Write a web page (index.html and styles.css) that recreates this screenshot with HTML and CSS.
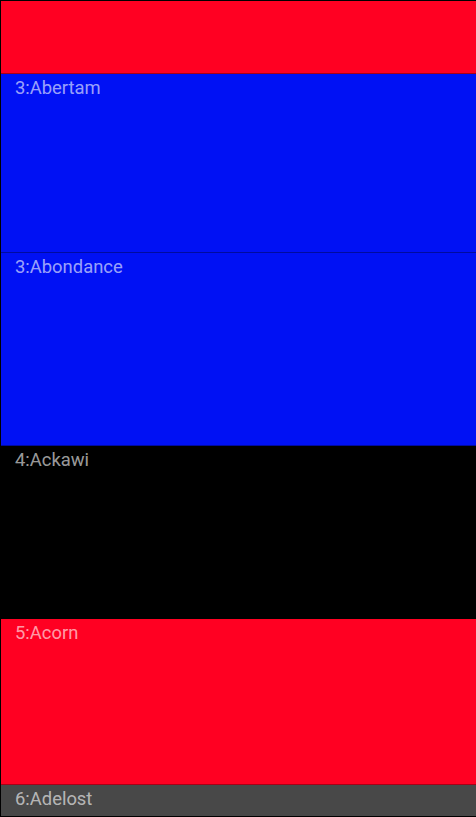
FILE: index.html
```html
<!DOCTYPE html>
<html>
<head>
<meta charset="utf-8">
<link rel="stylesheet" href="styles.css">
</head>
<body>
<div class="list">
  <div class="row red top"></div>
  <div class="row blue h1"><span class="label">3:Abertam</span></div>
  <div class="row blue h2"><span class="label">3:Abondance</span></div>
  <div class="row black h3"><span class="label">4:Ackawi</span></div>
  <div class="row red h4"><span class="label">5:Acorn</span></div>
  <div class="row gray h5"><span class="label">6:Adelost</span></div>
</div>
</body>
</html>
```
FILE: styles.css
```css
html, body {
  margin: 0;
  padding: 0;
  background: #000;
}
.list {
  width: 475px;
  height: 815px;
  border-top: 1px solid #000;
  border-left: 1px solid #000;
  border-bottom: 1px solid #000;
  display: flex;
  flex-direction: column;
  overflow: hidden;
  background: #484848;
}
.row {
  box-sizing: border-box;
  border-bottom: 1px solid rgba(0,0,0,0.35);
  padding: 2px 14px 0;
  font-family: Roboto, "Liberation Sans", sans-serif;
  font-size: 18.4px;
  line-height: 24px;
  color: rgba(255,255,255,0.62);
  flex: none;
}
.label { display: block; }
.red { background: #ff0022; }
.blue { background: #0011f4; }
.black { background: #000; }
.gray { background: #484848; border-bottom: none; flex: 1; }
.top { height: 73px; }
.h1 { height: 179px; }
.h2 { height: 193px; }
.h3 { height: 173px; }
.h4 { height: 166px; }
```
